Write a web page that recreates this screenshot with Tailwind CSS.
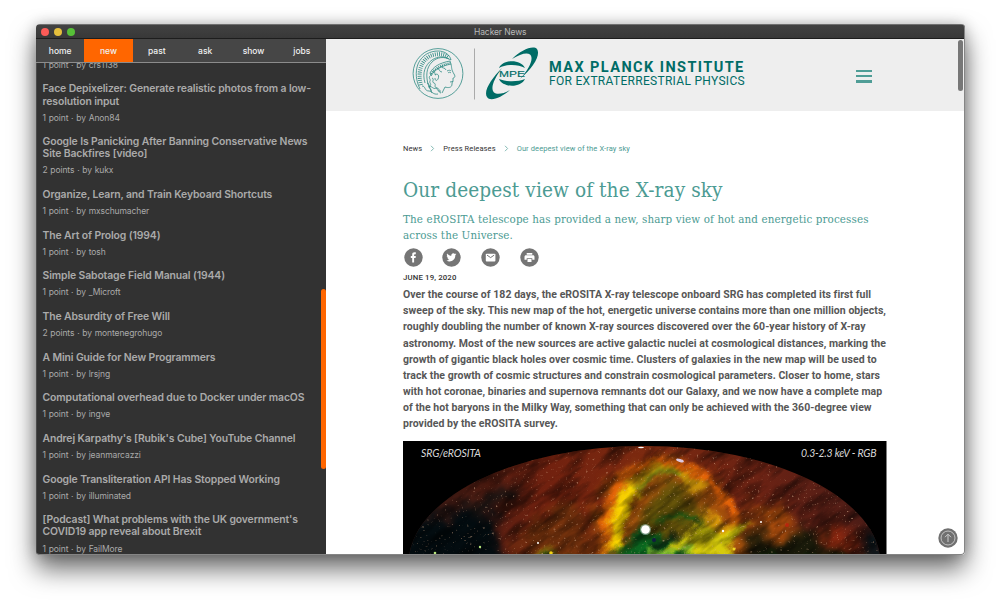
<!DOCTYPE html>
<html lang="en">
<head>
<meta charset="utf-8">
<title>Hacker News</title>
<script src="https://cdn.jsdelivr.net/npm/@tailwindcss/browser@4"></script>
</head>
<body class="w-[1000px] h-[602px] overflow-hidden bg-white pl-9 pt-6">
<div class="relative w-[928.5px] h-[530.5px] rounded-[4px] shadow-[0_14px_26px_rgba(0,0,0,0.58),0_0_14px_rgba(0,0,0,0.22)]">
<div class="w-full h-full rounded-[4px] overflow-hidden flex flex-col bg-white">
  <header class="relative h-[15px] shrink-0 bg-linear-to-b from-[#424242] to-[#383838] border-t border-[#707070] border-b border-b-[#1d1d1d] flex items-center justify-center font-['Inter']">
    <div class="absolute left-[5px] top-[2.5px] flex gap-[5px]">
      <i class="size-2 rounded-full bg-[#fc5b57]"></i><i class="size-2 rounded-full bg-[#e5bf3c]"></i><i class="size-2 rounded-full bg-[#57c038]"></i>
    </div>
    <span class="text-[8.5px] leading-none text-[#b9b9b9] tracking-[-0.1px] pt-px">Hacker News</span>
  </header>
  <div class="flex flex-1 min-h-0">
    <aside class="relative w-[290px] shrink-0 bg-[#323232] flex flex-col overflow-hidden font-['Inter'] shadow-[inset_1px_0_0_#4b4b4b]">
      <nav class="h-6 shrink-0 grid grid-cols-6 bg-[#464646] border-b border-[#8c8c8c] text-[8.5px] font-medium text-[#f0f0f0] text-center leading-[24px]">
        <a>home</a><a class="bg-[#ff6600] h-[23px]">new</a><a>past</a><a>ask</a><a>show</a><a>jobs</a>
      </nav>
      <div class="flex-1 min-h-0 overflow-hidden">
      <div class="-mt-[4.3px] pl-[6.5px] text-[#aaaaaa] text-[8.5px] tracking-[-0.1px] leading-3 whitespace-nowrap [&_p]:mb-[12.6px] [&_p]:[word-spacing:0.5px] [&_h2]:mb-[3.8px] [&_h2]:text-[10.4px] [&_h2]:leading-[12.25px] [&_h2]:font-semibold [&_h2]:tracking-[-0.11px]">
        <p>1 point · by crs1138</p>
        <h2>Face Depixelizer: Generate realistic photos from a low-<br>resolution input</h2><p>1 point · by Anon84</p>
        <h2>Google Is Panicking After Banning Conservative News<br>Site Backfires [video]</h2><p>2 points · by kukx</p>
        <h2>Organize, Learn, and Train Keyboard Shortcuts</h2><p>1 point · by mxschumacher</p>
        <h2>The Art of Prolog (1994)</h2><p>1 point · by tosh</p>
        <h2>Simple Sabotage Field Manual (1944)</h2><p>1 point · by _Microft</p>
        <h2>The Absurdity of Free Will</h2><p>2 points · by montenegrohugo</p>
        <h2>A Mini Guide for New Programmers</h2><p>1 point · by lrsjng</p>
        <h2>Computational overhead due to Docker under macOS</h2><p>1 point · by ingve</p>
        <h2>Andrej Karpathy's [Rubik's Cube] YouTube Channel</h2><p>1 point · by jeanmarcazzi</p>
        <h2>Google Transliteration API Has Stopped Working</h2><p>1 point · by illuminated</p>
        <h2>[Podcast] What problems with the UK government's<br>COVID19 app reveal about Brexit</h2><p>1 point · by FailMore</p>
      </div>
      </div>
      <div class="absolute right-0 top-[250px] w-[5.5px] h-[180px] rounded-[3px] bg-[#ff6600]"></div>
    </aside>
    <main class="relative flex-1 min-w-0 bg-white font-['Roboto'] overflow-hidden">
      <div class="h-[72px] bg-[#eeeeee] flex items-start pl-[86px] text-[#006c66]">
        <svg class="mt-2 shrink-0" width="130" height="54" viewBox="0 0 130 54" fill="none" stroke="#2e8a83" stroke-width=".8">
          <circle cx="26" cy="26.5" r="24.9"/>
          <path d="M8 42C4 34 3 25 6 17C10 8 18 4 26 4C33 4 38 8 39 13C32 9 25 10 20 15C14 21 14 29 16 37L20 46"/>
          <path d="M9 38C6 27 8 17 15 11C22 6 31 6 36 10" stroke-width="4" stroke-dasharray=".8 1.3"/>
          <path d="M13 36C10 26 13 18 20 13C26 9 32 9 37 12"/>
          <path d="M18 26C21 20 27 16 38 14L39 17C30 19 23 22 19 29Z"/>
          <path d="M19 27C24 21 29 18 38 16" stroke-width="2" stroke-dasharray="1 1"/>
          <path d="M39 17C40 21 39 22 42 27C44 30 42 31 41 31L41 34C41 35 40 35 40 37C40 41 36 41 33 40L30 46"/>
          <path d="M35 24c2-1 3-1 4 0M36 26c1-1 2-1 3 0M38 35l3-.5M23 28c2-2 5 0 3 4c-1 2-3 2-3-1"/>
          <path d="M18 29c-2 2 1 3 0 5s2 3 0 5s2 3 1 5M21 24c3 1 1 4 3 4M25 21c3 1 2 4 5 4M20 31c3 1-1 4 2 5s-1 4 3 5s0 4 4 5M15 36c3 0 1 4 4 4M10 39c4 0 2 5 7 5c3 0 4 4 9 3M29 19c1 3 4 1 5 4M16 40c4-2 5 3 8 1c2 1 1 4 5 3"/>
          <path d="M62.5 1.5V52.5" stroke="#aaa" stroke-width="1"/>
          <g fill="#006c66" stroke="none">
            <path d="M100 12C109 3 121-2 125 2C129 8 121 21 108 32C118 21 122 11 118 7.5C115 5 108 7 100 12Z"/>
            <path d="M98 43C89 51 78 55 75 50C71 44 80 31 90 21C82 32 78 41 82 45.5C85 48 91 47 98 43Z"/>
            <path d="M87 21C91 12 109 12 113 21C106 17 94 17 87 21ZM87 32C91 41 109 41 113 32C106 35 94 35 87 32Z"/>
          </g>
          <text x="87" y="30" textLength="26" lengthAdjust="spacingAndGlyphs" font-family="Liberation Sans" font-size="9.5" fill="#006c66" stroke="#006c66" stroke-width=".15">MPE</text>
        </svg>
        <div class="ml-[7px] mt-[20px] whitespace-nowrap">
          <div class="text-[14.5px] leading-[15px] font-bold tracking-[1.43px] pt-[0.5px]">MAX PLANCK INSTITUTE</div>
          <div class="text-[12px] leading-[15px] tracking-[0.3px] -mt-[0.5px]">FOR EXTRATERRESTRIAL PHYSICS</div>
        </div>
        <div class="ml-auto mr-[93px] mt-[31px] w-4 flex flex-col gap-[3px]"><i class="h-[2.2px] bg-[#4f9d96]"></i><i class="h-[2.2px] bg-[#4f9d96]"></i><i class="h-[2.2px] bg-[#4f9d96]"></i></div>
      </div>
      <article class="pl-[77px] text-[#4c9b93] whitespace-nowrap">
        <div class="mt-8 h-[11px] flex items-center text-[7.5px] tracking-[0.1px] leading-[11px] text-[#333]">
          <span>News</span>
          <svg class="mx-2" width="5" height="7" viewBox="0 0 5 7" fill="none" stroke="#78b3ad" stroke-width=".9"><path d="M1 .8L3.6 3.5L1 6.2"/></svg>
          <span>Press Releases</span>
          <svg class="mx-2" width="5" height="7" viewBox="0 0 5 7" fill="none" stroke="#78b3ad" stroke-width=".9"><path d="M1 .8L3.6 3.5L1 6.2"/></svg>
          <span class="text-[#4c9b93]">Our deepest view of the X-ray sky</span>
        </div>
        <h1 class="mt-[20.5px] text-[20.6px] leading-[30px] tracking-[0.09px] font-['DejaVu_Serif_Condensed','DejaVu_Serif']">Our deepest view of the X-ray sky</h1>
        <div class="mt-[7.5px] text-[11.5px] leading-[15.5px] tracking-[0.12px] font-['DejaVu_Serif_Condensed','DejaVu_Serif']">The eROSITA telescope has provided a new, sharp view of hot and energetic processes<br>across the Universe.</div>
        <div class="mt-[5px] pl-[0.5px] flex gap-[19.7px]">
          <svg width="19" height="19" viewBox="0 0 19 19"><circle cx="9.5" cy="9.5" r="9.2" fill="#757575"/><path d="M8.2 14.5V10H6.8V8h1.4V6.6C8.2 5 9 4.3 10.5 4.3h1.3v2h-.9c-.6 0-.8.3-.8.8V8h1.7l-.2 2h-1.5v4.5z" fill="#fff"/></svg>
          <svg width="19" height="19" viewBox="0 0 19 19"><circle cx="9.5" cy="9.5" r="9.2" fill="#757575"/><path d="M14.4 6.2c-.4.2-.7.3-1.1.3.4-.3.7-.6.9-1.1-.4.2-.8.4-1.3.5A2.05 2.05 0 0 0 9.4 7.8C7.7 7.7 6.2 6.9 5.1 5.6c-.5.9-.3 2.1.6 2.8-.3 0-.6-.1-.9-.3 0 1 .7 1.9 1.6 2.1-.3.1-.6.1-.9 0 .3.8 1 1.4 1.9 1.4-.9.7-1.9 1-3 .9 3.9 2.4 9-.2 8.9-5.2.4-.3.8-.7 1.1-1.1z" fill="#fff"/></svg>
          <svg width="19" height="19" viewBox="0 0 19 19"><circle cx="9.5" cy="9.5" r="9.2" fill="#757575"/><rect x="4.8" y="5.7" width="9.6" height="7.8" rx=".9" fill="#fff"/><path d="M6 7.1L9.6 9.6L13.2 7.1" fill="none" stroke="#757575"/></svg>
          <svg width="19" height="19" viewBox="0 0 19 19"><circle cx="9.5" cy="9.5" r="9.2" fill="#757575"/><path d="M6.7 5h5.6v1.7H6.7zM6 7.2h7c.9 0 1.5.6 1.5 1.5v3h-2.2v-1.500H6.700v1.500H4.500v-3c0-.9.6-1.500 1.500-1.500zM7.500 11h4v3h-4z" fill="#fff"/></svg>
        </div>
        <div class="mt-[4.5px] text-[7.8px] leading-[12px] font-medium tracking-[0.15px] text-[#333]">JUNE 19, 2020</div>
        <p class="mt-[3.8px] text-[10.5px] leading-[16.1px] font-bold tracking-[0.045px] text-[#575757]">Over the course of 182 days, the eROSITA X-ray telescope onboard SRG has completed its first full<br>sweep of the sky. This new map of the hot, energetic universe contains more than one million objects,<br>roughly doubling the number of known X-ray sources discovered over the 60-year history of X-ray<br>astronomy. Most of the new sources are active galactic nuclei at cosmological distances, marking the<br>growth of gigantic black holes over cosmic time. Clusters of galaxies in the new map will be used to<br>track the growth of cosmic structures and constrain cosmological parameters. Closer to home, stars<br>with hot coronae, binaries and supernova remnants dot our Galaxy, and we now have a complete map<br>of the hot baryons in the Milky Way, something that can only be achieved with the 360-degree view<br>provided by the eROSITA survey.</p>
        <svg class="mt-[8.7px] block" width="483.5" height="115" viewBox="0 0 483.5 115" color-interpolation-filters="sRGB">
          <defs>
            <clipPath id="sky"><ellipse cx="241.5" cy="123" rx="236" ry="118"/></clipPath>
            <linearGradient id="base" x2="1" y2="0"><stop offset="0" stop-color="#3a1c18"/><stop offset=".3" stop-color="#71210f"/><stop offset=".5" stop-color="#7c2a10"/><stop offset=".75" stop-color="#6a2214"/><stop offset="1" stop-color="#451b17"/></linearGradient>
            <filter id="wisp" x="-20%" y="-20%" width="140%" height="140%"><feTurbulence type="fractalNoise" baseFrequency=".045" numOctaves="4" seed="4" result="n"/><feGaussianBlur in="SourceGraphic" stdDeviation="2.5" result="b"/><feDisplacementMap in="b" in2="n" scale="20" xChannelSelector="R" yChannelSelector="G"/><feGaussianBlur stdDeviation=".7"/></filter>
            <filter id="soft" x="-30%" y="-30%" width="160%" height="160%"><feTurbulence type="fractalNoise" baseFrequency=".035" numOctaves="4" seed="9" result="n"/><feGaussianBlur in="SourceGraphic" stdDeviation="6" result="b"/><feDisplacementMap in="b" in2="n" scale="34" xChannelSelector="R" yChannelSelector="G"/><feGaussianBlur stdDeviation="1"/></filter>
            <filter id="grain" x="-50%" y="-100%" width="200%" height="300%"><feTurbulence type="fractalNoise" baseFrequency=".025 .083" numOctaves="6" seed="21"/><feColorMatrix values="0 0 0 0 0  0 0 0 0 0  0 0 0 0 0  2.4 0 0 0 -.9"/></filter>
            <filter id="stars" x="-50%" y="-100%" width="200%" height="300%"><feTurbulence type="fractalNoise" baseFrequency=".417" numOctaves="4" seed="12"/><feColorMatrix values="0 0 0 0 .85  0 0 0 0 .68  0 0 0 0 .55  0 6 0 0 -3.8"/></filter>
          </defs>
          <rect width="483.5" height="115" fill="#000"/>
          <g clip-path="url(#sky)">
            <rect width="483.5" height="115" fill="url(#base)"/>
            <g filter="url(#soft)">
              <path d="M-20 140V72L30 75L60 66L96 76L114 140Z" fill="#030c10"/>
              <path d="M55 60L108 44L123 53L75 72Z" fill="#151312"/>
              <path d="M120 80L180 60L190 130H118Z" fill="#75320d"/>
              <path d="M340 92L420 86L460 130H335Z" fill="#191a0a"/>
              <path d="M335 62L380 70L395 102L350 95Z" fill="#a84b0c"/>
              <path d="M420 82L450 88L458 112L428 105Z" fill="#8c2810"/>
              <path d="M462 95L483 95V125H462Z" fill="#07151a"/>
              <path d="M190 130C190 60 210 20 255 17C315 20 335 70 350 130Z" fill="#a4500c"/>
              <path d="M225 130C230 70 245 45 275 45C300 60 310 90 320 130Z" fill="#66540a"/>
            </g>
            <g filter="url(#wisp)" fill="none">
              <path d="M206 112C195 60 220 22 262 22C302 25 320 50 334 82" stroke="#e56408" stroke-width="11"/>
              <path d="M212 108C205 72 223 38 254 30C272 28 285 36 298 50" stroke="#cf9c08" stroke-width="12" opacity=".85"/>
              <path d="M209 112C211 86 216 64 232 49" stroke="#f8d200" stroke-width="15"/>
              <path d="M232 50C240 38 256 31 276 35" stroke="#8f9b14" stroke-width="6"/>
              <path d="M303 75C308 85 318 92 335 86" stroke="#e0a50a" stroke-width="16" opacity=".85"/>
              <path d="M222 115L245 94L263 100L300 118Z" fill="#087420" stroke="#0c6520" stroke-width="10"/>
              <path d="M266 108L284 98L302 90L317 99L335 90L322 111Z" fill="#dfcc08" stroke="#d6cb0b" stroke-width="10"/>
              <path d="M205 118L227 101M254 80L275 73L296 84" stroke="#145915" stroke-width="5"/>
              <path d="M245 109L270 112M278 112L288 103" stroke="#a0f23f" stroke-width="7"/>
              <path d="M246 104L268 92L275 102" stroke="#0c1c12" stroke-width="4"/>
              <path d="M105 119H165M335 120H470" stroke="#12360c" stroke-width="8"/>
              <path d="M130 115L153 113" stroke="#b7a112" stroke-width="3"/>
            </g>
            <rect width="483.5" height="340" y="-100" filter="url(#grain)" opacity=".55" transform="rotate(-38 241 60)"/>
            <rect width="483.5" height="115" filter="url(#stars)" opacity=".55" transform="rotate(-17 241 60)"/>
            <g fill="#fff"><circle cx="242.5" cy="88.5" r="5.5" fill="#bfe9db" opacity=".5"/><circle cx="242.5" cy="88.5" r="4.3"/><ellipse cx="277" cy="19.5" rx="4" ry="1.5" transform="rotate(18 277 19.5)" fill="#dcc9e2"/><ellipse cx="238" cy="6.5" rx="3" ry=".7"/><circle cx="320" cy="90" r="1.2"/><circle cx="358" cy="81" r="1"/><circle cx="135" cy="102" r="1"/></g>
            <g fill="#b5e47a"><circle cx="32" cy="112" r="1.3"/><circle cx="77" cy="106" r="1.2"/><circle cx="148" cy="112" r="1.8" fill="#f4d514"/><circle cx="331" cy="108" r="1.5" fill="#efd421"/><circle cx="384" cy="84" r="2" fill="#b7270d"/><circle cx="251" cy="99" r="2" fill="#111b40"/></g>
          </g>
          <g font-family="Lato" font-style="italic" font-size="10.5" fill="#d8d8d8"><text x="18" y="15.5" textLength="60">SRG/eROSITA</text><text x="398" y="15.5" textLength="75.5">0.3-2.3 keV - RGB</text></g>
        </svg>
      </article>
      <div class="absolute right-[1.5px] top-[1px] w-[5px] h-[51px] rounded-full bg-[#777]"></div>
      <svg class="absolute right-[6.5px] bottom-[6.5px]" width="20" height="20" viewBox="0 0 20 20" fill="none" stroke="#ccc"><circle cx="10" cy="10" r="9.7" fill="#707070" stroke="none"/><circle cx="10" cy="10" r="7" stroke-width=".9"/><path d="M10 14V6.3M7 9.2L10 6.2L13 9.2" stroke-width="1"/></svg>
    </main>
  </div>
</div>
<div class="absolute inset-0 rounded-[4px] border-b border-r border-[#858585] pointer-events-none"></div>
</div>
</body>
</html>
